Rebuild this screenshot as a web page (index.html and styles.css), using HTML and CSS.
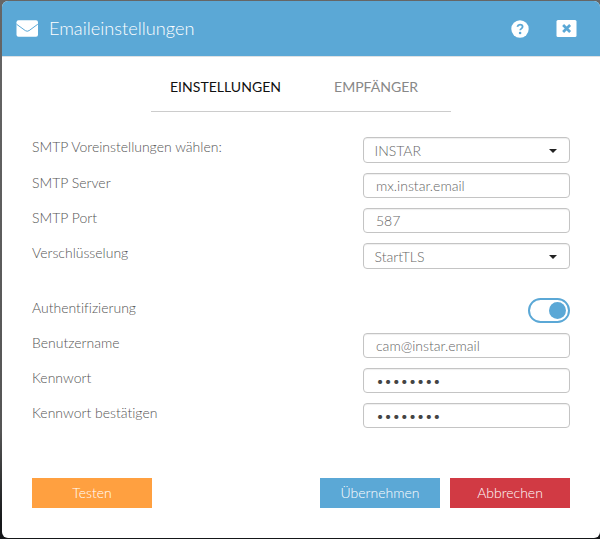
FILE: index.html
```html
<!DOCTYPE html>
<html lang="de"><head><meta charset="utf-8"><title>Emaileinstellungen</title><link rel="stylesheet" href="styles.css"></head>
<body>
<main class="dialog">
<header class="header">
<svg class="mail" viewBox="0 0 21 17"><rect y=".2" width="21.5" height="16.5" rx="2" fill="#fff"/><path d="M0 4.2 8.8 10.6q1.9 1.3 3.8 0L21.3 4.2" fill="none" stroke="#5ba8d6" stroke-width="1"/></svg>
<h1>Emaileinstellungen</h1>
<svg class="help" viewBox="0 0 18 18"><circle cx="9" cy="9" r="8.7" fill="#fff"/><path d="M6.3 6.8C6.8 5.2 7.8 4.6 9 4.6c1.5 0 2.6.9 2.6 2.2 0 1.8-2.4 1.8-2.4 3.5" fill="none" stroke="#5ba8d6" stroke-width="1.8"/><circle cx="9.1" cy="13" r="1.3" fill="#5ba8d6"/></svg>
<svg class="close" viewBox="0 0 20 17"><rect width="20" height="17" rx="1.5" fill="#fff"/><path d="m6.6 5 7 7m0-7-7 7" stroke="#5ba8d6" stroke-width="2.7"/></svg>
</header>
<nav class="tabs"><span class="tab active">EINSTELLUNGEN</span><span class="tab">EMPFÄNGER</span></nav>
<section class="form">
<div class="row first"><span>SMTP Voreinstellungen wählen:</span><div class="field select">INSTAR</div></div>
<div class="row"><span>SMTP Server</span><div class="field">mx.instar.email</div></div>
<div class="row"><span>SMTP Port</span><div class="field">587</div></div>
<div class="row"><span>Verschlüsselung</span><div class="field select">StartTLS</div></div>
<div class="row auth"><span>Authentifizierung</span><div class="switch"></div></div>
<div class="row"><span>Benutzername</span><div class="field">cam@instar.email</div></div>
<div class="row"><span>Kennwort</span><div class="field password">••••••••</div></div>
<div class="row"><span>Kennwort bestätigen</span><div class="field password">••••••••</div></div>
</section>
<footer class="actions"><button class="test">Testen</button><button class="apply">Übernehmen</button><button class="cancel">Abbrechen</button></footer>
</main>
</body></html>
```
FILE: styles.css
```css
*{box-sizing:border-box}
body{margin:0;background:linear-gradient(#666,#555 80%,#151719 97%);height:539px;overflow:hidden;font-family:Lato,sans-serif;font-weight:300;font-size:14px;color:#555;font-variant-ligatures:none;display:flow-root}
.dialog{height:537px;margin:1px 0 0 2px;width:598px;background:#fff;border-radius:6px;overflow:hidden}
.header{height:56px;background:#5ba8d6;border-bottom:1px solid #dde1e4;display:flex;align-items:center;padding:0 23px 0 14px}
.mail{width:22px;height:17px}
h1{margin:0 auto 0 11px;padding-bottom:2px;font-size:18.2px;font-weight:300;color:#fff;line-height:24px}
.help{width:18px;height:18px;margin-right:27px}
.close{width:21px;height:17px}
.tabs{width:300px;height:55px;margin:0 0 0 149px;border-bottom:1px solid #ccc;display:flex;padding:21px 0 0 19px;gap:53px;font-size:14.05px;line-height:18px;font-weight:400;color:#888}
.active{color:#111}
.form{padding:25px 30px 0;height:366px}
.row{display:flex;justify-content:space-between;height:35px;line-height:20px}
.row.first{height:36px}
.field{width:207px;height:25px;border:1px solid #c4c4c4;border-radius:4px;padding:0 12px;line-height:24px;box-shadow:inset 0 1px 1px #0001;color:#666}
.select{height:26px;padding:2px 12px 0 10.5px;display:flex;align-items:center;justify-content:space-between}
.select::after{content:"";border:4px solid transparent;border-top-color:#222;border-bottom:0}
.password{color:#444;line-height:24px}
.auth{margin-top:20px}
.switch{width:42px;height:25px;border:2px solid #5ba8d6;border-radius:13px;padding:2px;display:flex;justify-content:flex-end}
.switch::after{content:"";width:17px;height:17px;border-radius:50%;background:#5ba8d6}
.actions{display:flex;padding:0 30px;gap:10px}
button{width:120px;height:30px;border:0;padding:0 0 2px;color:#fff;font:300 14px Lato,sans-serif}
.test{background:#ffa040;margin-right:auto}.apply{background:#5ba8d6}.cancel{background:#d13a44}
```
